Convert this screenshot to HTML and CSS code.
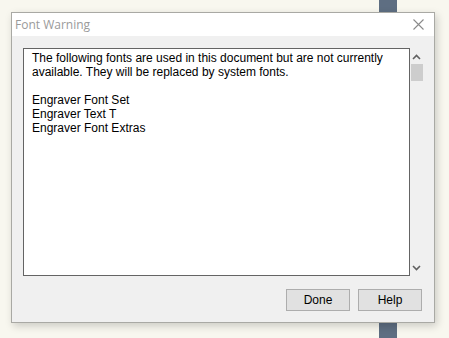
FILE: index.html
```html
<!DOCTYPE html>
<html>
<head>
    <link rel="stylesheet" href="styles.css">
</head>
<body>
    <div class="dialog">
        <div class="title-bar">
            <span class="title">Font Warning</span>
            <svg class="close" width="11" height="11" viewBox="0 0 11 11">
                <path d="M0.5 0.5 L10.5 10.5 M10.5 0.5 L0.5 10.5" stroke="#8a8a8a" stroke-width="1.1" fill="none"/>
            </svg>
        </div>

        <div class="content">
            <div class="list-area">
                <div class="text-box">
                    <p>The following fonts are used in this document but are not currently<br>available. They will be replaced by system fonts.</p>
                    <p>Engraver Font Set<br>Engraver Text T<br>Engraver Font Extras</p>
                </div>
                <div class="scrollbar">
                    <svg class="arrow" width="9" height="6" viewBox="0 0 9 6">
                        <path d="M1 5 L4.5 1.5 L8 5" stroke="#606060" stroke-width="1.6" fill="none"/>
                    </svg>
                    <div class="thumb"></div>
                    <div class="track"></div>
                    <svg class="arrow" width="9" height="6" viewBox="0 0 9 6">
                        <path d="M1 1 L4.5 4.5 L8 1" stroke="#606060" stroke-width="1.6" fill="none"/>
                    </svg>
                </div>
            </div>

            <div class="buttons">
                <button>Done</button>
                <button>Help</button>
            </div>
        </div>
    </div>
</body>
</html>
```

FILE: styles.css
```css
body {
    margin: 0;
    height: 338px;
    overflow: hidden;
    font-family: "Liberation Sans", Arial, sans-serif;
    background: linear-gradient(to right,
        #f8f7ef 0, #f8f7ef 379px,
        #5e6e82 379px, #5e6e82 397px,
        #f8f7ef 397px);
    padding-top: 12px;
    box-sizing: border-box;
}

.dialog {
    margin-left: 11px;
    width: 424px;
    height: 311px;
    box-sizing: border-box;
    border: 1px solid #a9a9a4;
    background-color: #f0f0f0;
    box-shadow: 2px 3px 8px rgba(0, 0, 0, 0.18);
    display: flex;
    flex-direction: column;
}

.title-bar {
    height: 24px;
    background-color: #ffffff;
    display: flex;
    align-items: center;
    justify-content: space-between;
    padding: 0 10px 0 3px;
}

.title {
    font-family: "Open Sans", "Noto Sans", sans-serif;
    font-size: 12px;
    color: #9a9a9a;
    margin-top: -1px;
}

.close {
    margin-top: 0px;
}

.content {
    flex: 1;
    display: flex;
    flex-direction: column;
    padding: 12px 11px 11px 11px;
}

.list-area {
    display: flex;
    height: 228px;
}

.text-box {
    width: 388px;
    box-sizing: border-box;
    border: 1px solid #646464;
    background-color: #ffffff;
    padding: 2px 8px;
    font-size: 12px;
    line-height: 14px;
    color: #000000;
}

.text-box p {
    margin: 0 0 14px 0;
}

.scrollbar {
    width: 13px;
    margin-left: 0px;
    display: flex;
    flex-direction: column;
    align-items: center;
    padding: 6px 0 5px 0;
    box-sizing: border-box;
}

.thumb {
    width: 12px;
    height: 17px;
    margin-top: 4px;
    background-color: #cdcdcd;
}

.track {
    flex: 1;
}

.buttons {
    display: flex;
    justify-content: flex-end;
    gap: 8px;
    margin-top: 13px;
    padding-right: 1px;
}

button {
    width: 64px;
    height: 22px;
    box-sizing: border-box;
    border: 1px solid #adadad;
    background-color: #e1e1e1;
    font-family: "Liberation Sans", Arial, sans-serif;
    font-size: 12px;
    color: #000000;
    padding: 0;
}
```
